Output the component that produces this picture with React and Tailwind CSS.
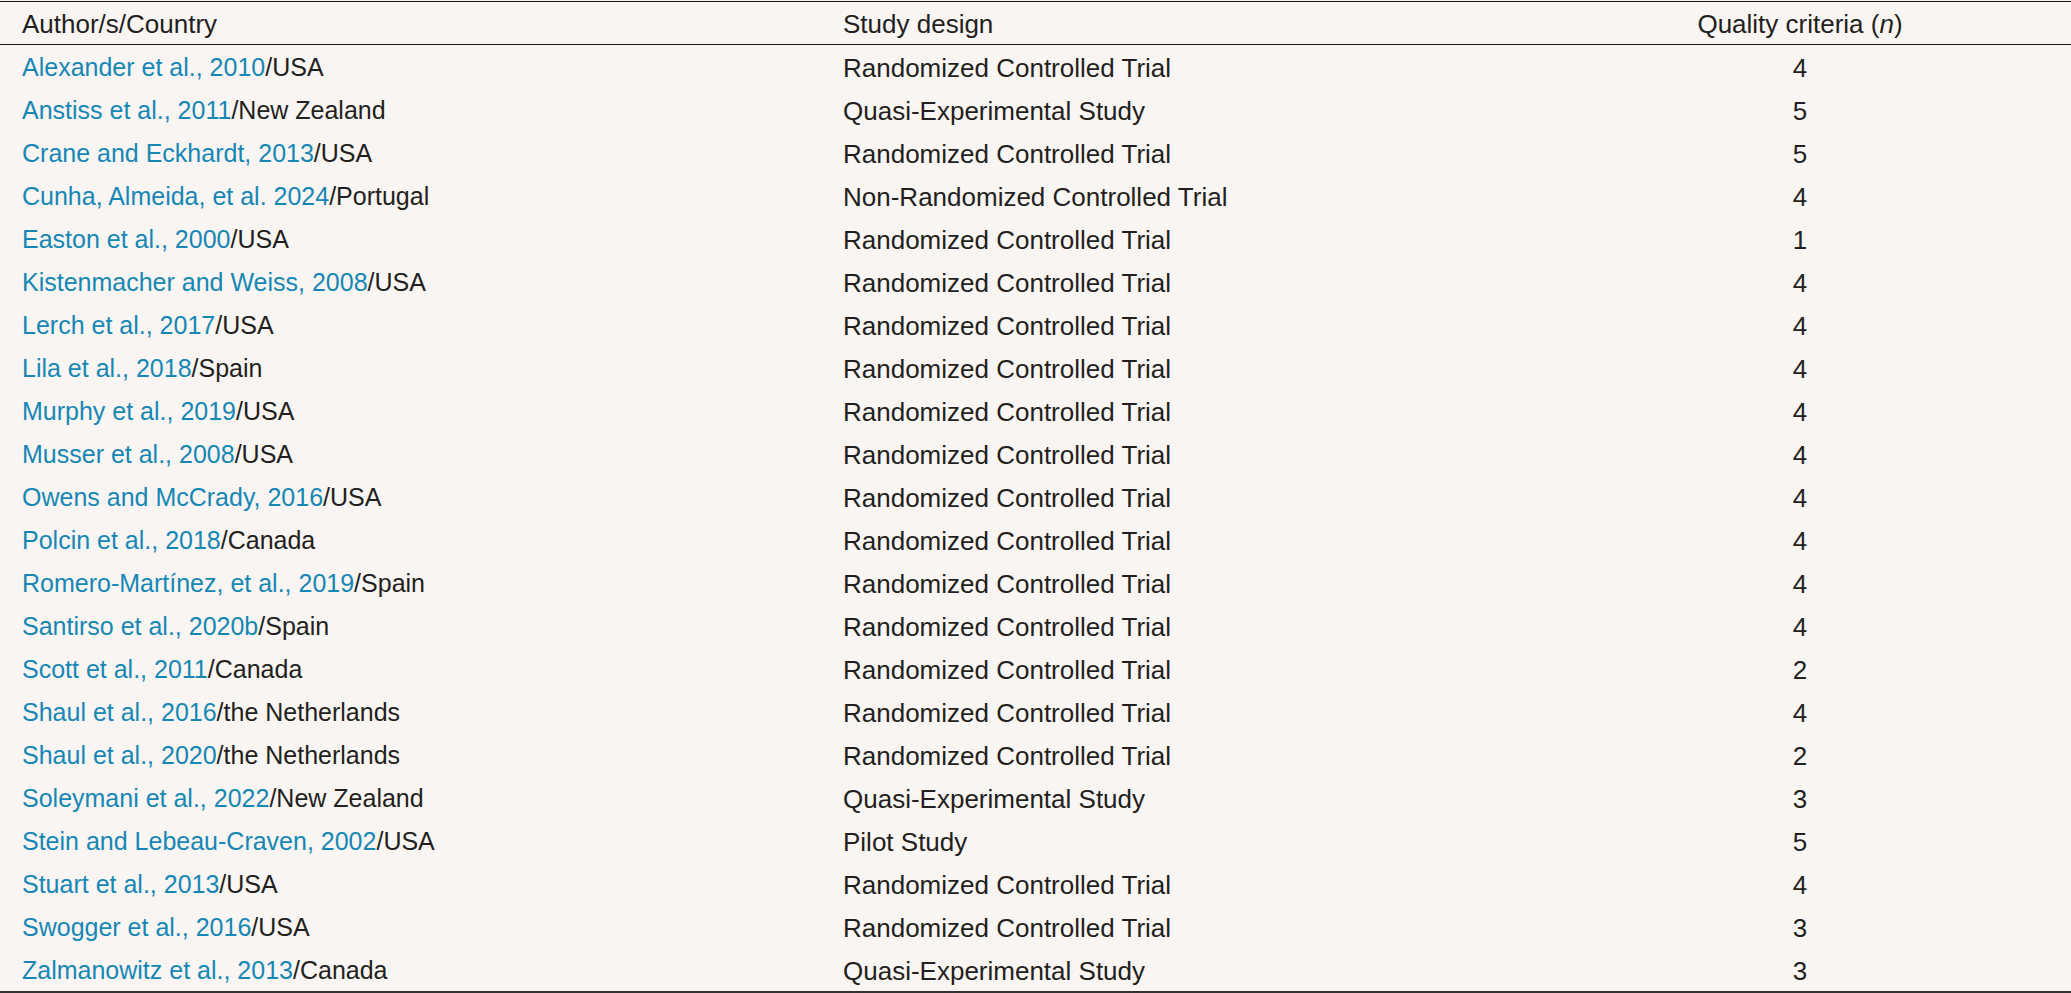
import React from "react";

const rows = [
  ["Alexander et al., 2010", "USA", "Randomized Controlled Trial", "4"],
  ["Anstiss et al., 2011", "New Zealand", "Quasi-Experimental Study", "5"],
  ["Crane and Eckhardt, 2013", "USA", "Randomized Controlled Trial", "5"],
  ["Cunha, Almeida, et al. 2024", "Portugal", "Non-Randomized Controlled Trial", "4"],
  ["Easton et al., 2000", "USA", "Randomized Controlled Trial", "1"],
  ["Kistenmacher and Weiss, 2008", "USA", "Randomized Controlled Trial", "4"],
  ["Lerch et al., 2017", "USA", "Randomized Controlled Trial", "4"],
  ["Lila et al., 2018", "Spain", "Randomized Controlled Trial", "4"],
  ["Murphy et al., 2019", "USA", "Randomized Controlled Trial", "4"],
  ["Musser et al., 2008", "USA", "Randomized Controlled Trial", "4"],
  ["Owens and McCrady, 2016", "USA", "Randomized Controlled Trial", "4"],
  ["Polcin et al., 2018", "Canada", "Randomized Controlled Trial", "4"],
  ["Romero-Martínez, et al., 2019", "Spain", "Randomized Controlled Trial", "4"],
  ["Santirso et al., 2020b", "Spain", "Randomized Controlled Trial", "4"],
  ["Scott et al., 2011", "Canada", "Randomized Controlled Trial", "2"],
  ["Shaul et al., 2016", "the Netherlands", "Randomized Controlled Trial", "4"],
  ["Shaul et al., 2020", "the Netherlands", "Randomized Controlled Trial", "2"],
  ["Soleymani et al., 2022", "New Zealand", "Quasi-Experimental Study", "3"],
  ["Stein and Lebeau-Craven, 2002", "USA", "Pilot Study", "5"],
  ["Stuart et al., 2013", "USA", "Randomized Controlled Trial", "4"],
  ["Swogger et al., 2016", "USA", "Randomized Controlled Trial", "3"],
  ["Zalmanowitz et al., 2013", "Canada", "Quasi-Experimental Study", "3"],
];

export default function App() {
  return (
    <div
      className="w-[2071px] h-[993px] bg-[#f9f5f2] text-[#231f20] text-[26px] leading-none overflow-hidden"
      style={{ fontFamily: "'Liberation Sans', Arial, sans-serif" }}
    >
      <div className="pt-px">
        <div className="border-t-[1.5px] border-b-[1.5px] border-[#1a1a1a] grid grid-cols-[821px_708px_1fr] h-[44px] items-center pt-[2px]">
          <div className="pl-[22px]">Author/s/Country</div>
          <div className="pl-[22px]">Study design</div>
          <div className="text-center">
            Quality criteria (<span className="italic">n</span>)
          </div>
        </div>
        <div className="border-b-2 border-[#333]">
          {rows.map((r, i) => (
            <div
              key={i}
              className="grid grid-cols-[821px_708px_1fr] h-[43px] items-center pt-[2px]"
            >
              <div className="pl-[22px] text-[25px]">
                <span className="text-[#1687b5]">{r[0]}</span>/{r[1]}
              </div>
              <div className="pl-[22px]">{r[2]}</div>
              <div className="text-center">{r[3]}</div>
            </div>
          ))}
        </div>
      </div>
    </div>
  );
}
